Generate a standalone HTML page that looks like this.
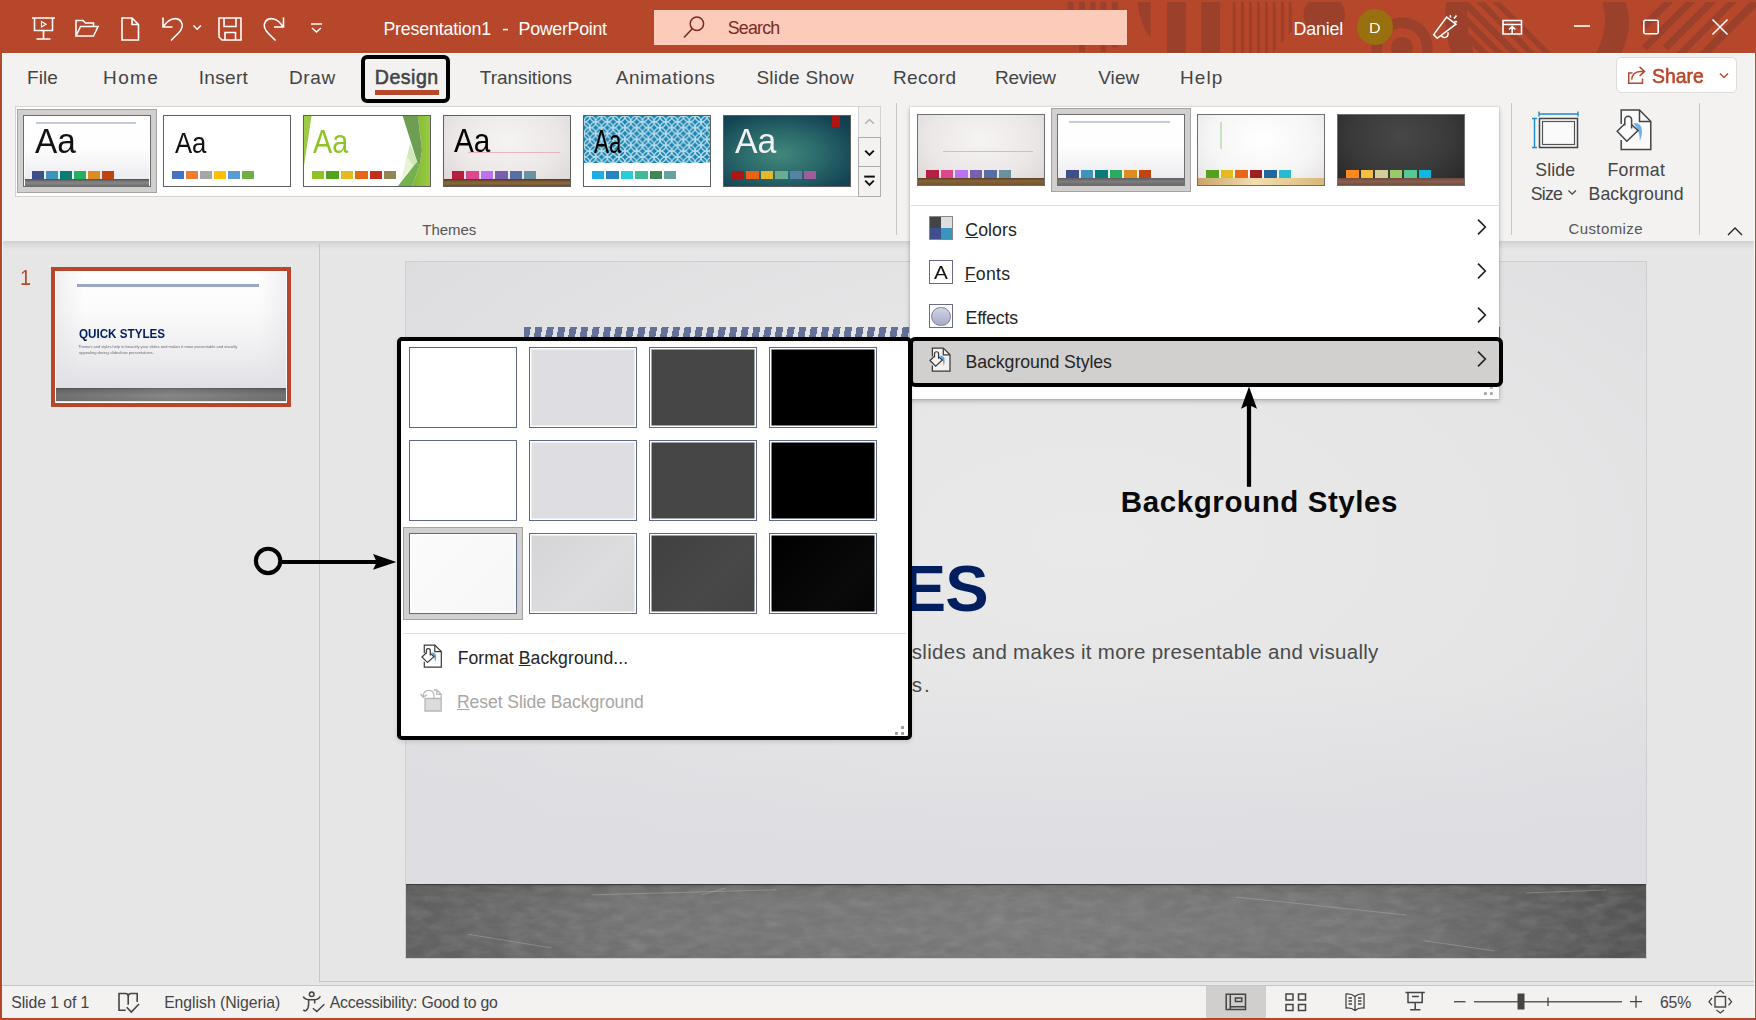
<!DOCTYPE html>
<html><head><meta charset="utf-8"><title>PowerPoint</title>
<style>
*{box-sizing:border-box;margin:0;padding:0}
html,body{width:1756px;height:1020px;overflow:hidden}
body{position:relative;background:#E6E6E6;font-family:"Liberation Sans",sans-serif;color:#444}
.a{position:absolute}
.t{position:absolute;white-space:pre;line-height:1;transform-origin:0 0}
#title{left:0;top:0;width:1756px;height:53px;background:#B7472A}
#ribbon{left:2px;top:53px;width:1752px;height:188px;background:#F3F2F1;border-top:1px solid #fbfdfe}
#rshadow{left:2px;top:241px;width:1752px;height:9px;background:linear-gradient(#cfcfcf,#dcdcdc 40%,#e6e6e6)}
#bl{left:0;top:53px;width:3px;height:967px;background:linear-gradient(90deg,#B7472A 0 2px,#fafafa 2px)}
#br{left:1754px;top:53px;width:2px;height:967px;background:linear-gradient(90deg,#fafafa 0 1px,#B7472A 1px)}
#bb{left:0;top:1018px;width:1756px;height:2px;background:#B7472A}
#status{left:2px;top:985px;width:1752px;height:33px;background:#F3F2F1;border-top:1px solid #c8c6c4}
#statusline{left:320px;top:981px;width:1434px;height:1px;background:#c6c6c6}
#pdiv{left:319px;top:244px;width:1px;height:738px;background:#c6c6c6}
.sq{position:absolute;width:12px;height:8px;top:56px}
.th{position:absolute;top:115px;width:128px;height:72px;border:1px solid #5e5e5e;overflow:hidden}
.th i{position:absolute;display:block}
</style></head>
<body>
<div class="a" id="title"><svg class="a" style="left:1040px;top:2px" width="716" height="51" viewBox="1040 2 716 51"><g fill="#9B402B">
<rect x="1067.700" y="2" width="6" height="9"/><rect x="1079" y="2" width="6" height="50"/><rect x="1090.200" y="2" width="5.300" height="9"/><rect x="1100.500" y="2" width="5.600" height="50"/><rect x="1111.800" y="2" width="6" height="45.500"/>
<path d="M1137.400 2h13.300v36q-11-13-13.300-36z"/>
<rect x="1167.100" y="2" width="19" height="51"/><rect x="1201.300" y="2" width="18.600" height="51"/>
<path d="M1232.700 2h3v51h-3zM1240.900 2h3v51h-3zM1249 2h3v51h-3zM1257 2h3v51h-3zM1265 2h3v51h-3zM1272.800 2h3v47.500l-3 3zM1280.900 2h3v38.500l-3 3zM1288.800 2h3v29l-3 3z"/>
<circle cx="1324.300" cy="15" r="20.700"/>
<path d="M1371.300 48a30.700 30.700 0 0 1 61.400 0v5h-10.700v-5a20 20 0 0 0-40 0v5h-10.700z"/><circle cx="1402" cy="48" r="10.900"/>
<path d="M1446.200 2h22.500l51 51h-68.700q-8-26-4.800-51z"/>
<path d="M1476.200 2h8.200l51 51h-8.200zM1492.300 2h7.800l51 51h-7.800z"/>
<path d="M1602.600 2q7 26-6.600 51h25q13-25 4.700-51z"/>
<path d="M1663.100 2H1673.400L1646.200 29.200 1641 24zM1685.700 2h9.700l-48.500 48.500-4.900-4.900zM1706.200 2h10.200l-48.500 48.500-5.100-5.100zM1727.700 2h9.200l-51 51h-9.200zM1750.100 2H1756V7.500L1710.500 53H1699.100z"/>
</g><g fill="#B7472A"><path d="M1467 9.900l43.100 43.100h-6.500l-36.600-36.600zM1468 25.900l27.100 27.100h-6.500l-20.600-20.600zM1472.500 46.200l6.800 6.800h-6.500z"/></g></svg><svg class="a" style="left:0;top:0" width="340" height="53" viewBox="0 0 340 53" fill="none" stroke="#fff" stroke-width="1.6" stroke-linejoin="miter">
<path d="M32 18h23M34.500 18v12.500h18v-12.500M43.500 30.500v8.500M36.500 39h14"/><path d="M41.500 21.500v5.500l4.500-2.750z" stroke-width="1.2"/>
<path d="M76 36v-15.500h7l2.500 2.500h8v3M76 36l4.500-9.500h17.500l-4.500 9.500z"/>
<path d="M122 18h10l6.500 6.500v15.500h-16.500zM132 18v6.500h6.500"/>
<path d="M163 17.500v9.500h9.500M163.500 27c5-9 14-10.500 17.500-5.500 3 4.500 0 9-3 12l-7 7"/>
<path d="M193.500 25.500l3.700 3.700 3.700-3.700" stroke-width="1.5"/>
<path d="M219 18h22v22h-19l-3-3zM224 18v8.500h12v-8.500M225 40v-7.500h10.500v7.500"/>
<path d="M283.500 17.500v9.500h-9.500M283 27c-5-9-14-10.500-17.500-5.500-3 4.500 0 9 3 12l7 7"/>
<path d="M311 24h11M312 28l4.500 4 4.500-4" stroke-width="1.5"/>
</svg><div class="t" style="left:383.38px;top:20.93px;font-size:17.8px;color:#fff;letter-spacing:-0.171px;">Presentation1</div><div class="t" style="left:501.92px;top:20.93px;font-size:17.8px;color:#fff;transform:scale(1.1822,1);">-</div><div class="t" style="left:518.55px;top:20.93px;font-size:17.8px;color:#fff;letter-spacing:-0.271px;">PowerPoint</div><div class="a" style="left:654px;top:10px;width:473px;height:35px;background:#FDCBB9"></div><svg class="a" style="left:680px;top:14px" width="28" height="26" viewBox="680 14 28 26" fill="none" stroke="#7A2A25" stroke-width="1.5"><circle cx="696.900" cy="23.800" r="6.700"/><path d="M692.200 28.700l-8.200 8.700"/></svg><div class="t" style="left:727.67px;top:19.63px;font-size:17.8px;color:#7A2A25;letter-spacing:-0.757px;">Search</div><div class="t" style="left:1293.6px;top:20.93px;font-size:17.8px;color:#fff;letter-spacing:-0.142px;">Daniel</div><div class="a" style="left:1357px;top:9px;width:36px;height:36px;border-radius:50%;background:#98700F"></div><div class="t" style="left:1368.69px;top:20.64px;font-size:14.6px;color:#fff;transform:scale(1.0986,1);">D</div><svg class="a" style="left:1420px;top:0" width="336" height="53" viewBox="1420 0 336 53" fill="none" stroke="#fff" stroke-width="1.6">
<path d="M1433.700 34.600l12.900-17.500 9.300 7.100-18.700 14.100zM1441.400 35.600a3.400 3.400 0 0 0 6.300-3.200M1450.100 15.300l.6 2.200M1456.500 15.500l-2.500 3.100M1454.300 21.600l2.800.2"/>
<path d="M1503 20.500h18.500v13.500h-18.500zM1503 24.500h18.500M1512.200 34v-7M1509 29.500l3.200-3 3.200 3"/>
<path d="M1574 26h16"/>
<rect x="1643.800" y="20.300" width="14.400" height="13.400" rx="1.500"/>
<path d="M1712.500 19.500l15 15M1727.500 19.500l-15 15"/>
</svg></div><div class="a" id="ribbon"></div><div class="a" id="rshadow"></div><div class="t" style="left:27.01px;top:67.92px;font-size:19px;color:#444;letter-spacing:0.026px;">File</div><div class="t" style="left:103.01px;top:67.92px;font-size:19px;color:#444;letter-spacing:1.405px;">Home</div><div class="t" style="left:198.81px;top:67.92px;font-size:19px;color:#444;letter-spacing:0.295px;">Insert</div><div class="t" style="left:289.01px;top:67.92px;font-size:19px;color:#444;letter-spacing:0.609px;">Draw</div><div class="t" style="left:374.74px;top:68.41px;font-size:19.6px;color:#444;letter-spacing:0.502px;-webkit-text-stroke:.55px #444;">Design</div><div class="t" style="left:479.73px;top:67.92px;font-size:19px;color:#444;letter-spacing:0.011px;">Transitions</div><div class="t" style="left:615.66px;top:67.92px;font-size:19px;color:#444;letter-spacing:0.581px;">Animations</div><div class="t" style="left:756.46px;top:67.92px;font-size:19px;color:#444;letter-spacing:0.238px;">Slide Show</div><div class="t" style="left:893.01px;top:67.92px;font-size:19px;color:#444;letter-spacing:0.357px;">Record</div><div class="t" style="left:995.01px;top:67.92px;font-size:19px;color:#444;letter-spacing:-0.281px;">Review</div><div class="t" style="left:1098.19px;top:67.92px;font-size:19px;color:#444;letter-spacing:0.102px;">View</div><div class="t" style="left:1179.95px;top:67.92px;font-size:19px;color:#444;letter-spacing:1.125px;">Help</div><div class="a" style="left:375px;top:90px;width:64px;height:5px;background:#B7472A"></div><div class="a" style="left:361px;top:55px;width:89px;height:48px;border:4px solid #000;border-radius:6px"></div><div class="a" style="left:1616px;top:57px;width:121px;height:36px;background:#fff;border:1px solid #dddbd9;border-radius:5px"></div><svg class="a" style="left:1625px;top:64px" width="24" height="22" viewBox="1625 64 24 22" fill="none" stroke="#B7472A" stroke-width="1.5"><path d="M1632.500 72.900H1628.700V83.200H1642.500V78.500M1639.600 66.900L1644.500 71.400 1639.600 76M1631.700 79.600Q1632.200 71.700 1640.500 71.400H1644"/></svg><div class="t" style="left:1652.03px;top:65.63px;font-size:20.4px;color:#B7472A;transform:scale(0.9499,1);-webkit-text-stroke:.6px #B7472A;">Share</div><svg class="a" style="left:1717.300px;top:70.200px" width="14" height="12" viewBox="0 0 14 12" fill="none" stroke="#B7472A" stroke-width="1.4"><path d="M3 3.500l4 4 4-4"/></svg><div class="a" style="left:15px;top:106px;width:866px;height:91px;background:#fff;border:1px solid #d4d2d0"></div><div class="a" style="left:17px;top:109px;width:140px;height:84px;background:#D2D0CE;border:1px solid #a6a4a2"></div><div class="th" style="left:23px;background:linear-gradient(#fff 0%,#fefefe 45%,#ececf1 90%);border-color:#6b6b6b;box-shadow:inset 0 0 0 1px #fff"><i style="left:12px;top:5.500px;width:100px;height:2px;background:#c3c9de"></i><i style="left:8px;top:55px;width:12px;height:8px;background:#3F4E8C"></i><i style="left:22px;top:55px;width:12px;height:8px;background:#3B94BB"></i><i style="left:36px;top:55px;width:12px;height:8px;background:#0A7C78"></i><i style="left:50px;top:55px;width:12px;height:8px;background:#27AE60"></i><i style="left:64px;top:55px;width:12px;height:8px;background:#E08B1F"></i><i style="left:78px;top:55px;width:12px;height:8px;background:#C0440F"></i><i style="left:1px;top:63px;width:124px;height:6.500px;background:linear-gradient(#4e4e4e,#7a7a7a 35%,#858585 60%,#6e6e6e)"></i></div><div class="t" style="left:35.17px;top:122.67px;font-size:35px;color:#111;transform:scale(0.953,1);">Aa</div><div class="th" style="left:163px;background:#fff"><i style="left:8px;top:55px;width:12px;height:8px;background:#4472C4"></i><i style="left:22px;top:55px;width:12px;height:8px;background:#ED7D31"></i><i style="left:36px;top:55px;width:12px;height:8px;background:#A5A5A5"></i><i style="left:50px;top:55px;width:12px;height:8px;background:#FFC000"></i><i style="left:64px;top:55px;width:12px;height:8px;background:#5B9BD5"></i><i style="left:78px;top:55px;width:12px;height:8px;background:#70AD47"></i></div><div class="t" style="left:174.9px;top:128.97px;font-size:29.1px;color:#111;transform:scale(0.8821,1);">Aa</div><div class="th" style="left:303px;background:#fff"><svg class="a" style="left:0;top:0" width="126" height="70" viewBox="0 0 126 70"><path d="M0 0h7.500L0 50z" fill="#9DCB45"/><defs><linearGradient id="fg" x1="0" x2="1"><stop offset="0" stop-color="#7FB436"/><stop offset="1" stop-color="#9ACC40"/></linearGradient></defs><path d="M113.800 0H126V70H108L115.500 50.300 118 34z" fill="url(#fg)"/><path d="M98.700 0H113.800L118 34 115.500 50.300 113 45.500z" fill="#6E9E52"/><path d="M113 45.500L115.500 50.300 108 70H94z" fill="#74B14F"/><path d="M105.900 27.800L113.400 45.500 98.500 60.800z" fill="#D3E8B8"/><path d="M103.500 41L109.500 49.500 96.500 65z" fill="#E9F4DC" opacity=".85"/></svg><i style="left:8px;top:55px;width:12.2px;height:8px;background:#90C226"></i><i style="left:22.45px;top:55px;width:12.2px;height:8px;background:#54A021"></i><i style="left:36.9px;top:55px;width:12.2px;height:8px;background:#E6B91E"></i><i style="left:51.35px;top:55px;width:12.2px;height:8px;background:#E76618"></i><i style="left:65.8px;top:55px;width:12.2px;height:8px;background:#C42F1A"></i><i style="left:80.25px;top:55px;width:12.2px;height:8px;background:#918655"></i></div><div class="t" style="left:313.09px;top:125.33px;font-size:33.4px;color:#8DC428;transform:scale(0.8626,1);">Aa</div><div class="th" style="left:443px;background:radial-gradient(ellipse at 50% 35%,#f6f3f3 0%,#ece7e7 60%,#d9d3d3 100%)"><i style="left:24px;top:36px;width:92px;height:1px;background:#e7b3c2"></i><i style="left:8px;top:55px;width:12.2px;height:8px;background:#B71E42"></i><i style="left:22.45px;top:55px;width:12.2px;height:8px;background:#DE478E"></i><i style="left:36.9px;top:55px;width:12.2px;height:8px;background:#BC72F0"></i><i style="left:51.35px;top:55px;width:12.2px;height:8px;background:#795FAF"></i><i style="left:65.8px;top:55px;width:12.2px;height:8px;background:#586EA6"></i><i style="left:80.25px;top:55px;width:12.2px;height:8px;background:#6892A0"></i><i style="left:0;top:63.400px;width:126px;height:6.600px;background:linear-gradient(#4f371f,#7d5c35 35%,#8a693f 60%,#6d4e2b)"></i></div><div class="t" style="left:453.91px;top:124.3px;font-size:33.9px;color:#000;transform:scale(0.8758,1);">Aa</div><div class="th" style="left:583px;background:#fff"><svg class="a" style="left:0;top:0" width="126" height="47" viewBox="0 0 126 47"><defs><pattern id="cp" width="11.700" height="11.700" patternUnits="userSpaceOnUse"><rect width="11.700" height="11.700" fill="#1A84B1"/><g fill="none" stroke="#d4ecf6" stroke-width="1.100" opacity=".9"><circle cx="0" cy="0" r="5.850"/><circle cx="11.700" cy="0" r="5.850"/><circle cx="0" cy="11.700" r="5.850"/><circle cx="11.700" cy="11.700" r="5.850"/><circle cx="5.850" cy="5.850" r="5.850"/></g></pattern></defs><rect width="126" height="47" fill="url(#cp)"/></svg><i style="left:8px;top:55px;width:12.2px;height:8px;background:#1CADE4"></i><i style="left:22.45px;top:55px;width:12.2px;height:8px;background:#2683C6"></i><i style="left:36.9px;top:55px;width:12.2px;height:8px;background:#27CED7"></i><i style="left:51.35px;top:55px;width:12.2px;height:8px;background:#42BA97"></i><i style="left:65.8px;top:55px;width:12.2px;height:8px;background:#3E8853"></i><i style="left:80.25px;top:55px;width:12.2px;height:8px;background:#62A39F"></i></div><div class="t" style="left:594.27px;top:125.56px;font-size:32.3px;color:#000;transform:scale(0.691,1);">Aa</div><div class="th" style="left:723px;background:radial-gradient(ellipse at 45% 55%,#42877b 0%,#2b6a6b 40%,#154555 80%,#113c4e 100%)"><i style="left:108px;top:0;width:8px;height:11px;background:#B01513"></i><i style="left:8px;top:55px;width:12.2px;height:8px;background:#B01513"></i><i style="left:22.45px;top:55px;width:12.2px;height:8px;background:#EA6312"></i><i style="left:36.9px;top:55px;width:12.2px;height:8px;background:#E6B729"></i><i style="left:51.35px;top:55px;width:12.2px;height:8px;background:#6AAC90"></i><i style="left:65.8px;top:55px;width:12.2px;height:8px;background:#5483A5"></i><i style="left:80.25px;top:55px;width:12.2px;height:8px;background:#9E5E9B"></i></div><div class="t" style="left:734.87px;top:122.67px;font-size:35px;color:#f2f2f2;transform:scale(0.9648,1);">Aa</div><div class="a" style="left:858px;top:106px;width:23px;height:32px;border:1px solid #d4d2d0;background:#F3F2F1"></div><div class="a" style="left:858px;top:137px;width:23px;height:30px;border:1px solid #aeacaa;background:#F3F2F1"></div><div class="a" style="left:858px;top:166px;width:23px;height:31px;border:1px solid #aeacaa;background:#F3F2F1"></div><svg class="a" style="left:858px;top:106px" width="23" height="91" viewBox="0 0 23 91" fill="none" stroke-width="1.500"><path d="M7.200 17.800l4.300-4.300 4.300 4.300" stroke="#b3b1af"/><path d="M7.200 44.700l4.300 4.300 4.300-4.300" stroke="#111" stroke-width="1.900"/><path d="M6.200 70.600h10.600" stroke="#111" stroke-width="2"/><path d="M7.200 74.600l4.300 4.300 4.300-4.300" stroke="#111" stroke-width="1.900"/></svg><div class="t" style="left:422.3px;top:221.9px;font-size:15px;color:#555;letter-spacing:-0.061px;">Themes</div><div class="a" style="left:896px;top:103px;width:1px;height:132px;background:#c8c6c4"></div><div class="a" style="left:1511px;top:103px;width:1px;height:132px;background:#c8c6c4"></div><div class="a" style="left:1699px;top:103px;width:1px;height:132px;background:#c8c6c4"></div><svg class="a" style="left:1528px;top:106px" width="132" height="48" viewBox="1528 106 132 48" fill="none">
<path d="M1539 114h39M1539 111.500v5M1578 111.500v5M1534.500 118.500v29M1532 118.500h5M1532 147.500h5" stroke="#1E8BCD" stroke-width="1.4"/>
<rect x="1539.500" y="118.500" width="38" height="29" fill="#fafafa" stroke="#444" stroke-width="1.5"/><rect x="1542.500" y="121.500" width="32" height="23" stroke="#555" stroke-width="1.2"/>
<path d="M1621.200 124V110H1639.500L1650.800 121.500V149.500H1621.200V140" stroke="#444" stroke-width="1.500" fill="#fafafa"/><path d="M1639.500 110V121.500H1650.800" stroke="#444" stroke-width="1.500"/>
<path d="M1633.500 123.200q7-1 8.300 6 .8 6-2 11.500 .5-9-6.300-17.500z" fill="#6CB2E6" stroke="none"/>
<path d="M1617.200 131.300L1627.500 121 1638 130.500 1626.800 141.200z" stroke="#444" stroke-width="1.500" fill="#fafafa"/>
<path d="M1624.800 125.500V119.600a3.400 3.400 0 0 1 6.800 0V128.500" stroke="#444" stroke-width="1.500" fill="#fafafa"/>
</svg><div class="t" style="left:1535.35px;top:161.82px;font-size:17.7px;color:#444;letter-spacing:0.078px;">Slide</div><div class="t" style="left:1530.69px;top:185.82px;font-size:17.7px;color:#444;letter-spacing:-0.719px;">Size</div><svg class="a" style="left:1566.400px;top:186.800px" width="12" height="12" viewBox="0 0 12 12" fill="none" stroke="#444" stroke-width="1.3"><path d="M2.500 3.500l3.700 3.700 3.700-3.700"/></svg><div class="t" style="left:1607.46px;top:161.82px;font-size:17.7px;color:#444;letter-spacing:0.271px;">Format</div><div class="t" style="left:1588.55px;top:185.82px;font-size:17.7px;color:#444;letter-spacing:0.072px;">Background</div><div class="t" style="left:1568.43px;top:220.7px;font-size:15px;color:#555;letter-spacing:0.416px;">Customize</div><svg class="a" style="left:1726px;top:225px" width="18" height="12" viewBox="0 0 18 12" fill="none" stroke="#252423" stroke-width="1.4"><path d="M2 10l7-7 7 7"/></svg><div class="a" id="bl"></div><div class="a" id="br"></div><div class="a" id="pdiv"></div><div class="t" style="left:19.74px;top:267.8px;font-size:21.5px;color:#B7472A;transform:scale(0.9225,1);">1</div><div class="a" style="left:51px;top:267px;width:240px;height:140px;background:#fff;border:4px solid #B7472A"></div><div class="a" style="left:56px;top:271px;width:230px;height:130.500px;overflow:hidden;background:linear-gradient(90deg,rgba(225,225,230,.5),rgba(255,255,255,0) 12%,rgba(255,255,255,0) 88%,rgba(225,225,230,.5)),linear-gradient(#ffffff 0%,#fbfbfb 30%,#efeff1 60%,#e1e0e6 88%)"><div class="a" style="left:21.200px;top:12.800px;width:181.500px;height:3px;background:#9EA6C6"></div><div class="a" style="left:0;top:116.700px;width:230px;height:13.800px;background:linear-gradient(90deg,rgba(70,70,70,.3),rgba(140,140,140,.25) 50%,rgba(70,70,70,.3)),linear-gradient(#555 0,#6e6e6e 2px,#858585 55%,#7b7b7b 100%)"></div></div><div class="t" style="left:78.88px;top:327.96px;font-size:12.8px;color:#011E5E;font-weight:700;transform:scale(0.91,1);">QUICK STYLES</div><div class="t" style="left:77.58px;top:345.3px;font-size:3.9px;color:#6a6a72;transform:scale(1.0232,1);">Themes and styles help to beautify your slides and makes it more presentable and visually</div><div class="t" style="left:78.95px;top:351.4px;font-size:3.9px;color:#6a6a72;transform:scale(1.035,1);">appealing during slideshow presentations.</div><div class="a" style="left:405px;top:261px;width:1242px;height:698px;overflow:hidden;border:1px solid #cfcfcf;background:radial-gradient(ellipse 75% 70% at 55% 40%,#e9e9ea 0%,#e5e5e6 50%,#dcdcdf 100%)"><div class="a" style="left:0;top:420px;width:1242px;height:203px;background:linear-gradient(rgba(222,221,226,0),#dedde2 90%)"></div><div class="a" style="left:0;top:622px;width:1242px;height:76px;background:linear-gradient(#2c2c2c 0,#5e5e5e 1.500px,#6b6b6b 4px,#727272 14px,#747474 50px,#6f6f6f 76px)"></div><div class="a" style="left:0;top:623px;width:1242px;height:75px;background:linear-gradient(90deg,rgba(50,50,50,.3) 0,rgba(80,80,80,0) 18%,rgba(160,160,160,.14) 50%,rgba(120,120,120,.05) 78%,rgba(30,30,30,.38) 100%)"></div><svg class="a" style="left:0;top:623px" width="1242" height="75"><filter id="nz" x="0" y="0" width="100%" height="100%"><feTurbulence type="fractalNoise" baseFrequency=".05 .12" numOctaves="5" seed="7"/><feColorMatrix values="0 0 0 0 .5  0 0 0 0 .49  0 0 0 0 .47  .9 .9 .9 0 -1.05"/></filter><rect width="1242" height="75" filter="url(#nz)" opacity=".22"/><path d="M61.600 49.200L145.300 62.900M186 9.900L370.800 4.800M295.600 9.900L319.600 3.100M1018.700 55.800L1088.600 65.800M830 12L1000 30M1120 8L1200 5" stroke="rgba(200,200,200,.32)" stroke-width="1" fill="none"/></svg><div class="a" style="left:118px;top:65px;width:976px;height:12px;background:repeating-linear-gradient(100deg,#62709A 0 6.800px,rgba(226,226,230,0) 6.800px 11.300px)"></div></div><div class="t" style="left:902.82px;top:555.78px;font-size:65px;color:#011E5E;font-weight:700;letter-spacing:-1.016px;">ES</div><div class="t" style="left:911.84px;top:641.85px;font-size:20.5px;color:#4a4a4a;letter-spacing:0.295px;">slides and makes it more presentable and visually</div><div class="t" style="left:911.84px;top:675.15px;font-size:20.5px;color:#4a4a4a;letter-spacing:1.863px;">s.</div><div class="a" style="left:910px;top:106.500px;width:589px;height:292.500px;background:#fff;box-shadow:0 2px 5px rgba(0,0,0,.24),0 0 0 1px rgba(0,0,0,.05)"></div><div class="th" style="left:917px;top:114px;border-color:#6e6e6e;background:radial-gradient(ellipse at 50% 35%,#f6f3f3 0%,#ece7e7 60%,#d9d3d3 100%)"><i style="left:25px;top:36px;width:90px;height:1px;background:#e7b3c2"></i><i style="left:8.2px;top:55px;width:12.4px;height:8px;background:#B71E42"></i><i style="left:22.7px;top:55px;width:12.4px;height:8px;background:#DE478E"></i><i style="left:37.2px;top:55px;width:12.4px;height:8px;background:#BC72F0"></i><i style="left:51.7px;top:55px;width:12.4px;height:8px;background:#795FAF"></i><i style="left:66.2px;top:55px;width:12.4px;height:8px;background:#586EA6"></i><i style="left:80.7px;top:55px;width:12.4px;height:8px;background:#6892A0"></i><i style="left:0;top:63px;width:126px;height:7px;background:linear-gradient(#5a3f22,#86643a 40%,#74542e)"></i></div><div class="a" style="left:1051px;top:108px;width:140px;height:84px;background:#D2D0CE;border:1px solid #a6a4a2"></div><div class="th" style="left:1057px;top:114px;border-color:#6e6e6e;background:linear-gradient(#fff 0%,#fefefe 45%,#ececf1 90%)"><i style="left:11px;top:5.500px;width:101px;height:2px;background:#c3c9de"></i><i style="left:8.2px;top:55px;width:12.4px;height:8px;background:#3F4E8C"></i><i style="left:22.7px;top:55px;width:12.4px;height:8px;background:#3B94BB"></i><i style="left:37.2px;top:55px;width:12.4px;height:8px;background:#0A7C78"></i><i style="left:51.7px;top:55px;width:12.4px;height:8px;background:#27AE60"></i><i style="left:66.2px;top:55px;width:12.4px;height:8px;background:#E08B1F"></i><i style="left:80.7px;top:55px;width:12.4px;height:8px;background:#C0440F"></i><i style="left:0;top:63px;width:126px;height:7px;background:linear-gradient(#5e5e5e,#7d7d7d 50%,#6a6a6a)"></i></div><div class="th" style="left:1197px;top:114px;border-color:#6e6e6e;background:radial-gradient(ellipse at 50% 35%,#ffffff 0%,#f6f5f5 60%,#e2e0df 100%)"><i style="left:22px;top:7px;width:2px;height:27px;background:#c9e2c2"></i><i style="left:8.2px;top:55px;width:12.4px;height:8px;background:#54A021"></i><i style="left:22.7px;top:55px;width:12.4px;height:8px;background:#E6B91E"></i><i style="left:37.2px;top:55px;width:12.4px;height:8px;background:#E76618"></i><i style="left:51.7px;top:55px;width:12.4px;height:8px;background:#9C1F23"></i><i style="left:66.2px;top:55px;width:12.4px;height:8px;background:#21669C"></i><i style="left:80.7px;top:55px;width:12.4px;height:8px;background:#27BBD1"></i><i style="left:0;top:63px;width:126px;height:7px;background:linear-gradient(90deg,#c9a468,#f3deb0 45%,#d9b77c)"></i></div><div class="th" style="left:1337px;top:114px;border-color:#6e6e6e;background:radial-gradient(ellipse at 50% 30%,#484747 0%,#3b3a3a 55%,#272626 100%)"><i style="left:8.2px;top:55px;width:12.4px;height:8px;background:#FF8A1C"></i><i style="left:22.7px;top:55px;width:12.4px;height:8px;background:#F5C040"></i><i style="left:37.2px;top:55px;width:12.4px;height:8px;background:#D3CF9B"></i><i style="left:51.7px;top:55px;width:12.4px;height:8px;background:#9BC96A"></i><i style="left:66.2px;top:55px;width:12.4px;height:8px;background:#55C995"></i><i style="left:80.7px;top:55px;width:12.4px;height:8px;background:#0FB8E0"></i><i style="left:0;top:63px;width:126px;height:7px;background:linear-gradient(#6e4a3c,#8a5f4e 50%,#71503f)"></i></div><div class="a" style="left:911px;top:205px;width:588px;height:1px;background:#e1dfdd"></div><div class="a" style="left:929px;top:216px;width:24px;height:24px;border:1px solid #8a8886;background:#fff"><i class="a" style="left:0;top:0;width:11px;height:11px;background:#444"></i><i class="a" style="left:11px;top:0;width:11px;height:11px;background:#DEDDE2"></i><i class="a" style="left:0;top:11px;width:11px;height:11px;background:#3F4E8C"></i><i class="a" style="left:11px;top:11px;width:11px;height:11px;background:#3B94BB"></i></div><div class="t" style="left:965.31px;top:221.82px;font-size:17.7px;color:#252423;letter-spacing:0.075px;"><u>C</u>olors</div><div class="a" style="left:929px;top:260px;width:24px;height:24px;border:1px solid #6a6a8a;background:#fff"></div><div class="t" style="left:933.65px;top:264.29px;font-size:18.8px;color:#111;transform:scale(1.1068,1);">A</div><div class="t" style="left:964.72px;top:265.72px;font-size:17.7px;color:#252423;letter-spacing:0.298px;"><u>F</u>onts</div><div class="a" style="left:929px;top:304px;width:24px;height:24px;border:1px solid #6a6a8a;background:#fff"><i class="a" style="left:1.200px;top:1.500px;width:19.500px;height:19.500px;border-radius:50%;border:1px solid #7a7f9e;background:linear-gradient(#d3d5e5,#a6aac6)"></i></div><div class="t" style="left:965.6px;top:309.82px;font-size:17.7px;color:#252423;letter-spacing:-0.227px;">Effects</div><div class="a" style="left:909px;top:337px;width:594px;height:50px;background:#D2D0CE;border:4.300px solid #000;border-radius:6px"></div><svg class="a" style="left:928.6px;top:347.3px" width="22" height="25.2" viewBox="1615.500 108 37 43.500" preserveAspectRatio="none" fill="none" stroke="#3b3a39" stroke-width="2.100"><path d="M1621.200 124V110H1639.500L1650.800 121.500V149.500H1621.200V140" fill="#f3f2f1"/><path d="M1639.500 110V121.500H1650.800"/><path d="M1633.500 123.200q7-1 8.300 6 .8 6-2 11.500 .5-9-6.300-17.500z" fill="#5AA9E6" stroke="none"/><path d="M1617.200 131.300L1627.500 121 1638 130.500 1626.800 141.200z" fill="#f3f2f1"/><path d="M1624.800 125.500V119.600a3.400 3.400 0 0 1 6.800 0V128.500" fill="#f3f2f1"/></svg><div class="t" style="left:965.6px;top:353.82px;font-size:17.7px;color:#252423;letter-spacing:-0.073px;">Background Styles</div><svg class="a" style="left:1474px;top:217.3px" width="16" height="20" viewBox="0 0 16 20" fill="none" stroke="#252423" stroke-width="1.700"><path d="M4 2.700l7.300 7.300-7.300 7.300"/></svg><svg class="a" style="left:1474px;top:261.3px" width="16" height="20" viewBox="0 0 16 20" fill="none" stroke="#252423" stroke-width="1.700"><path d="M4 2.700l7.300 7.300-7.300 7.300"/></svg><svg class="a" style="left:1474px;top:305.3px" width="16" height="20" viewBox="0 0 16 20" fill="none" stroke="#252423" stroke-width="1.700"><path d="M4 2.700l7.300 7.300-7.300 7.300"/></svg><svg class="a" style="left:1474px;top:349.3px" width="16" height="20" viewBox="0 0 16 20" fill="none" stroke="#252423" stroke-width="1.700"><path d="M4 2.700l7.300 7.300-7.300 7.300"/></svg><svg class="a" style="left:1482px;top:386px" width="14" height="12" viewBox="1482 386 14 12" fill="#a3a1a0"><rect x="1484.100" y="392.200" width="2.700" height="2.700"/><rect x="1490.100" y="392.200" width="2.700" height="2.700"/><rect x="1490.100" y="387.300" width="2.700" height="1.500"/></svg><svg class="a" style="left:1230px;top:384px" width="40" height="106" viewBox="1230 384 40 106"><path d="M1249 403V486.800" stroke="#000" stroke-width="4.200" fill="none"/><path d="M1249 386.600L1257 408.700 1249 405 1241 408.700z" fill="#000"/></svg><div class="t" style="left:1120.83px;top:487.03px;font-size:29.5px;color:#0a0a0a;font-weight:700;letter-spacing:0.593px;">Background Styles</div><div class="a" style="left:397px;top:337px;width:515px;height:403px;background:#fff;border:4px solid #000;border-radius:5px;box-shadow:0 2px 4px rgba(0,0,0,.12)"></div><div class="a" style="left:403px;top:527px;width:120px;height:93px;background:#D2D0CE;border:1px solid #a6a4a2"></div><div class="a" style="left:409px;top:347px;width:108px;height:81px;border:1px solid #5d6986;background:#ffffff;box-shadow:inset 0 0 0 1.500px #fff"></div><div class="a" style="left:529px;top:347px;width:108px;height:81px;border:1px solid #5d6986;background:#DEDDE2;box-shadow:inset 0 0 0 1.500px #fff"></div><div class="a" style="left:649px;top:347px;width:108px;height:81px;border:1px solid #5d6986;background:#464646;box-shadow:inset 0 0 0 1.500px #fff"></div><div class="a" style="left:769px;top:347px;width:108px;height:81px;border:1px solid #5d6986;background:#000000;box-shadow:inset 0 0 0 1.500px #fff"></div><div class="a" style="left:409px;top:440px;width:108px;height:81px;border:1px solid #5d6986;background:#ffffff;box-shadow:inset 0 0 0 1.500px #fff"></div><div class="a" style="left:529px;top:440px;width:108px;height:81px;border:1px solid #5d6986;background:#DEDDE2;box-shadow:inset 0 0 0 1.500px #fff"></div><div class="a" style="left:649px;top:440px;width:108px;height:81px;border:1px solid #5d6986;background:#464646;box-shadow:inset 0 0 0 1.500px #fff"></div><div class="a" style="left:769px;top:440px;width:108px;height:81px;border:1px solid #5d6986;background:#000000;box-shadow:inset 0 0 0 1.500px #fff"></div><div class="a" style="left:409px;top:533px;width:108px;height:81px;border:1px solid #5d6986;background:linear-gradient(135deg,#fbfbfb,#f7f7f7);box-shadow:inset 0 0 0 1.500px #fff"></div><div class="a" style="left:529px;top:533px;width:108px;height:81px;border:1px solid #5d6986;background:linear-gradient(135deg,#d5d4d7,#dddcde 60%,#d8d7da);box-shadow:inset 0 0 0 1.500px #fff"></div><div class="a" style="left:649px;top:533px;width:108px;height:81px;border:1px solid #5d6986;background:linear-gradient(135deg,#404040,#484848 60%,#434343);box-shadow:inset 0 0 0 1.500px #fff"></div><div class="a" style="left:769px;top:533px;width:108px;height:81px;border:1px solid #5d6986;background:linear-gradient(135deg,#000,#0a0a0a 70%,#050505);box-shadow:inset 0 0 0 1.500px #fff"></div><div class="a" style="left:403px;top:633px;width:503px;height:1px;background:#e1dfdd"></div><svg class="a" style="left:421px;top:643.8px" width="21.3" height="24.3" viewBox="1615.500 108 37 43.500" preserveAspectRatio="none" fill="none" stroke="#3b3a39" stroke-width="2.100"><path d="M1621.200 124V110H1639.500L1650.800 121.500V149.500H1621.200V140" fill="#ffffff"/><path d="M1639.500 110V121.500H1650.800"/><path d="M1633.500 123.200q7-1 8.300 6 .8 6-2 11.500 .5-9-6.300-17.500z" fill="#5AA9E6" stroke="none"/><path d="M1617.200 131.300L1627.500 121 1638 130.500 1626.800 141.200z" fill="#ffffff"/><path d="M1624.800 125.500V119.600a3.400 3.400 0 0 1 6.800 0V128.500" fill="#ffffff"/></svg><div class="t" style="left:457.68px;top:649.9px;font-size:17.6px;color:#252423;letter-spacing:0.064px;">Format <u>B</u>ackground...</div><svg class="a" style="left:418px;top:685px" width="28" height="30" viewBox="418 685 28 30" fill="none" stroke="#bab8b6" stroke-width="1.300"><path d="M425 698.500H441.200V711H425z" fill="#dddcdb"/><path d="M441.200 698.500V694.300L436.800 690H433.500M436.800 690V694.300H441.200"/><path d="M423.200 697.200q-.3-6.600 5.600-6.800 5-.1 5.200 5.400v2.400M420.600 693.800l2.600 3.600 3.600-2.500"/></svg><div class="t" style="left:456.99px;top:693.7px;font-size:17.6px;color:#a8a6a4;letter-spacing:-0.095px;"><u>R</u>eset Slide Background</div><svg class="a" style="left:893px;top:724px" width="13" height="13" viewBox="893 724 13 13" fill="#9e9c9a"><rect x="901.100" y="726.100" width="2.900" height="2.900"/><rect x="895" y="732" width="2.900" height="2.900"/><rect x="901.100" y="732" width="2.900" height="2.900"/></svg><svg class="a" style="left:250px;top:540px" width="150" height="44" viewBox="250 540 150 44"><circle cx="268.100" cy="560.900" r="12.200" fill="none" stroke="#000" stroke-width="4.100"/><path d="M282 562H378" stroke="#000" stroke-width="4.200"/><path d="M396.300 562.100L373 554.100 376.800 562 373 569.800z" fill="#000"/></svg><div class="a" id="statusline"></div><div class="a" id="status"></div><div class="a" id="bb"></div><div class="t" style="left:11.28px;top:994.63px;font-size:15.8px;color:#444;letter-spacing:-0.095px;">Slide 1 of 1</div><svg class="a" style="left:115px;top:990px" width="28" height="24" viewBox="115 990 28 24" fill="none" stroke="#444" stroke-width="1.600"><path d="M125.700 1010.200H119V993.500H125.500Q128.200 993.500 128.200 996.500V1004.700M128.200 996.500Q128.200 993.500 131 993.500H137.200V1002M126.700 1007.300L131.300 1012 139 1004"/></svg><div class="t" style="left:164.14px;top:994.63px;font-size:15.8px;color:#444;letter-spacing:-0.041px;">English (Nigeria)</div><svg class="a" style="left:300px;top:989px" width="28" height="26" viewBox="300 989 28 26" fill="none" stroke="#444" stroke-width="1.500"><circle cx="311.700" cy="994.300" r="2.300"/><path d="M303.300 996.600q1 2.800 5.300 3.200v4.400q0 4.300-2.500 6.100-1.800 1.100-2.700-.7M320.300 996.200q-1.200 3.100-5.600 3.600h-6.100M314.700 999.800v3.800M312.900 1008.200l3.900 3.300 7.500-7.300"/></svg><div class="t" style="left:329.71px;top:994.63px;font-size:15.8px;color:#444;letter-spacing:-0.204px;">Accessibility: Good to go</div><div class="a" style="left:1206px;top:986px;width:60px;height:32px;background:#D0CFCE"></div><svg class="a" style="left:1220px;top:988px" width="520" height="28" viewBox="1220 988 520 28" fill="none" stroke="#444" stroke-width="1.500">
<path d="M1226.200 994.300h19.300v15.300h-19.300zM1230.300 994.300v15.300M1230.300 1006.800h15.200"/><rect x="1235.400" y="998" width="6.400" height="3.500"/>
<path d="M1286 994h7v6h-7zM1298.500 994h7v6h-7zM1286 1004.500h7v6h-7zM1298.500 1004.500h7v6h-7z"/>
<path d="M1355 996.500v14M1355 996.500q-3.500-3-9-2.500v14q5.500-.5 9 2.500 3.500-3 9-2.500v-14q-5.500-.5-9 2.500M1348.500 998h3.500M1348.500 1001h3.500M1348.500 1004h3.500M1358 998h3.500M1358 1001h3.500M1358 1004h3.500" stroke-width="1.300"/>
<path d="M1405.400 992.600h19.400M1408 992.600v9.800h14.200v-9.800M1415.200 1002.400v7.200M1410.200 1009.700h10.200M1412 996.400h6.800"/>
<path d="M1454 1001.700h11.500" stroke-width="1.300"/>
<path d="M1474 1001.700h148" stroke-width="1.500" stroke="#605e5c"/><path d="M1548 997.500v8.500" stroke-width="1.300"/>
<rect x="1517.500" y="993.500" width="7" height="16" fill="#444" stroke="none"/>
<path d="M1630 1001.700h12M1636 995.700v12" stroke-width="1.300"/>
<rect x="1715" y="996.500" width="10.500" height="10.500" stroke-width="1.400"/><path d="M1716.500 993.500l3.800-3 3.800 3M1716.500 1010l3.800 3 3.800-3M1712 998l-3 3.700 3 3.700M1728.500 998l3 3.700-3 3.700" stroke-width="1.300"/>
</svg><div class="t" style="left:1659.9px;top:994.63px;font-size:15.8px;color:#444;letter-spacing:-0.145px;">65%</div>
</body></html>
